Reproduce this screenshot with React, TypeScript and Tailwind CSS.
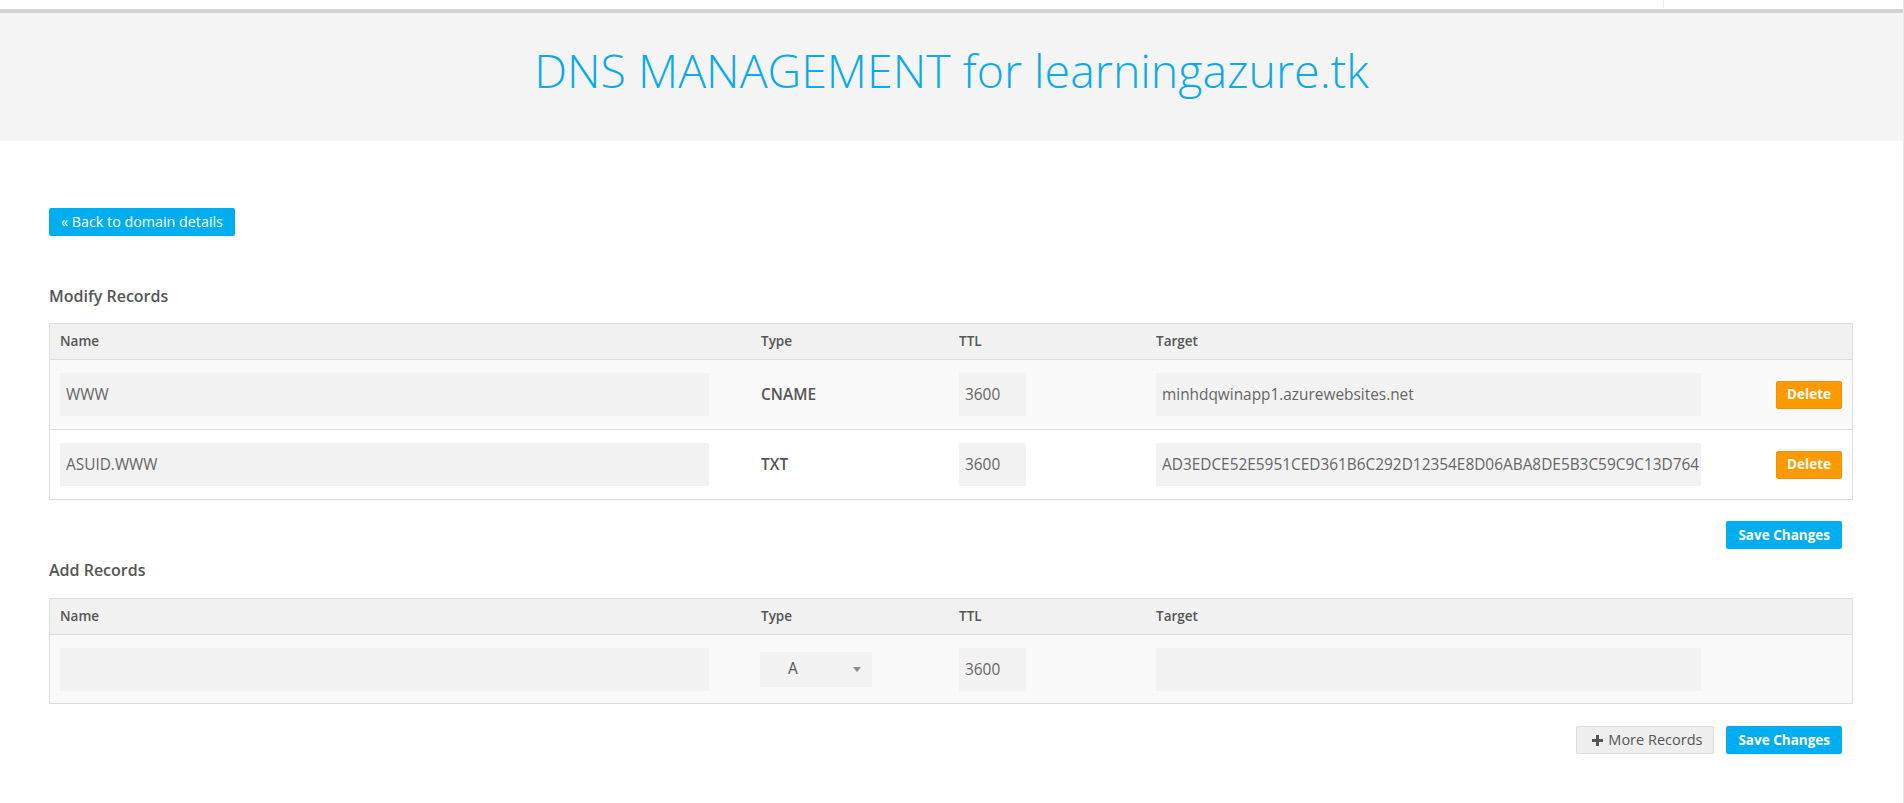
import React from 'react';

const COLS = 'grid grid-cols-[701px_198px_197px_570px_136px]';

const HeaderRow: React.FC = () => (
  <div className={`${COLS} h-[36px] items-center border-b border-[#dddddd] bg-[#f1f1f1] text-[13.5px] font-semibold text-[#555555]`}>
    <div className="pl-[10px]">Name</div>
    <div className="pl-[10px]">Type</div>
    <div className="pl-[10px]">TTL</div>
    <div className="pl-[10px]">Target</div>
    <div />
  </div>
);

const Field: React.FC<{ value: string; width: string }> = ({ value, width }) => (
  <input
    readOnly
    value={value}
    className={`${width} h-[43px] bg-[#f2f2f2] pl-[6px] pr-[1px] text-[15.4px] text-[#666666] outline-none`}
  />
);

interface RecordRow {
  name: string;
  type: string;
  ttl: string;
  target: string;
}

const records: RecordRow[] = [
  { name: 'WWW', type: 'CNAME', ttl: '3600', target: 'minhdqwinapp1.azurewebsites.net' },
  { name: 'ASUID.WWW', type: 'TXT', ttl: '3600', target: 'AD3EDCE52E5951CED361B6C292D12354E8D06ABA8DE5B3C59C9C13D764' },
];

const SaveButton: React.FC = () => (
  <button className="h-[28px] rounded-[2px] bg-[#00adee] px-[12px] text-[13.5px] font-bold text-white">
    Save Changes
  </button>
);

export default function App() {
  return (
    <div className="min-h-screen border-r border-[#e8e8e8] bg-white pb-[40px] font-['Open_Sans',sans-serif] text-[#555555]">
      {/* top strip */}
      <div className="flex h-[9px]">
        <div className="h-[8px] w-[1664px] border-r border-[#ececec]" />
      </div>
      <div className="h-[4px] bg-[#d3d3d3]" />

      {/* page title */}
      <div className="h-[128px] bg-[#f4f4f4] pt-[23px] text-center">
        <h1 className="text-[46.5px] font-light leading-normal text-[#0aa9ec]">DNS MANAGEMENT for learningazure.tk</h1>
      </div>

      <div className="pl-[49px] pr-[50px]">
        <button className="mt-[67px] h-[28px] rounded-[2px] bg-[#00adee] px-[12px] text-[14.3px] text-white">
          « Back to domain details
        </button>

        {/* Modify */}
        <h2 className="mt-[49px] text-[16px] font-semibold leading-[22px] text-[#555555]">Modify Records</h2>
        <div className="mt-[16px] border border-[#dddddd]">
          <HeaderRow />
          {records.map((r, i) => (
            <div
              key={r.name}
              className={`${COLS} items-center ${i === 0 ? 'h-[70px] border-b border-[#dddddd] bg-[#f9f9f9]' : 'h-[69px] bg-white'}`}
            >
              <div className="pl-[10px]">
                <Field value={r.name} width="w-[649px]" />
              </div>
              <div className="pl-[10px] text-[15.5px] font-semibold text-[#555555]">{r.type}</div>
              <div className="pl-[10px]">
                <Field value={r.ttl} width="w-[67px]" />
              </div>
              <div className="pl-[10px]">
                <Field value={r.target} width="w-[545px]" />
              </div>
              <div className="flex justify-end pr-[10px]">
                <button className="h-[28px] rounded-[2px] border border-[#f39200] bg-[#ff9900] px-[10px] text-[13.5px] font-bold text-white">
                  Delete
                </button>
              </div>
            </div>
          ))}
        </div>
        <div className="mt-[21px] flex justify-end pr-[11px]">
          <SaveButton />
        </div>

        {/* Add */}
        <h2 className="mt-[10px] text-[16px] font-semibold leading-[22px] text-[#555555]">Add Records</h2>
        <div className="mt-[17px] border border-[#dddddd]">
          <HeaderRow />
          <div className={`${COLS} h-[68px] items-center bg-[#f9f9f9]`}>
            <div className="pl-[10px]">
              <Field value="" width="w-[649px]" />
            </div>
            <div className="pl-[9px]">
              <div className="flex h-[35px] w-[112px] items-center justify-between bg-[#f2f2f2] pl-[28px] pr-[11px] text-[15.5px] text-[#555555]">
                <span>A</span>
                <svg width="8" height="5" viewBox="0 0 8 5">
                  <path d="M0 0h8L4 5z" fill="#8c8c8c" />
                </svg>
              </div>
            </div>
            <div className="pl-[10px]">
              <Field value="3600" width="w-[67px]" />
            </div>
            <div className="pl-[10px]">
              <Field value="" width="w-[545px]" />
            </div>
            <div />
          </div>
        </div>
        <div className="mt-[22px] flex justify-end gap-[12px] pr-[11px]">
          <button className="flex h-[28px] items-center gap-[5px] rounded-[2px] border border-[#dddddd] bg-[#eeeeee] pl-[15px] pr-[11px] text-[14.5px] text-[#555555]">
            <svg width="11" height="11" viewBox="0 0 11 11">
              <path d="M4 0h3v4h4v3H7v4H4V7H0V4h4z" fill="#555555" />
            </svg>
            More Records
          </button>
          <SaveButton />
        </div>
      </div>
    </div>
  );
}
